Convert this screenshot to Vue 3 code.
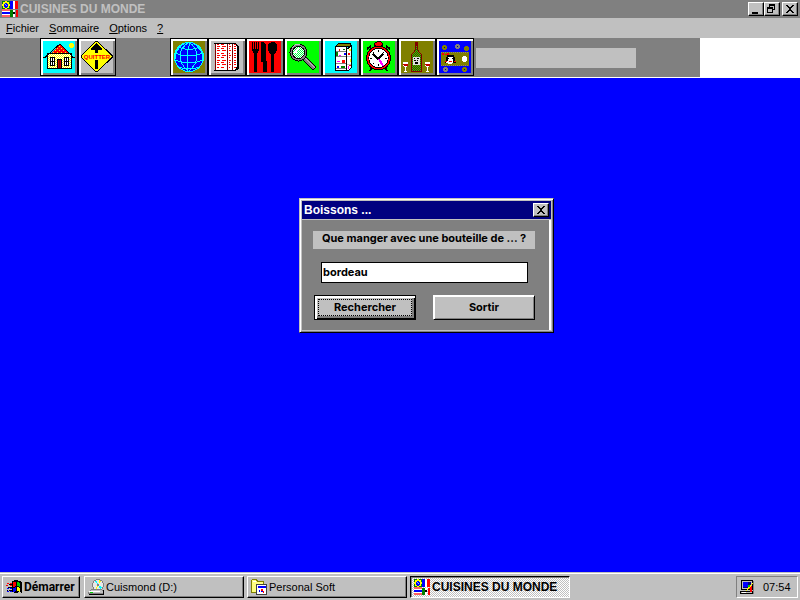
<script setup>
import { ref } from 'vue'

const query = ref('bordeau')
const dialogOpen = ref(true)

const menus = [
  { key: 'F', rest: 'ichier' },
  { key: 'S', rest: 'ommaire' },
  { key: 'O', rest: 'ptions' },
  { key: '?', rest: '' },
]

const tasks = [
  { label: 'Cuismond (D:)', icon: 'drive', active: false },
  { label: 'Personal Soft', icon: 'folder', active: false },
  { label: 'CUISINES DU MONDE', icon: 'flags', active: true },
]

// rows of small print on the recipe page
const printRows = [3, 5, 7, 9, 12, 14, 16, 19, 21, 23, 26]
</script>

<template>
  <div class="screen">
    <svg class="defs" aria-hidden="true">
      <symbol id="flags" viewBox="0 0 16 16">
        <path fill="#008000" d="M0 0h8v8h-8z" />
        <path fill="#ff0" d="M3 0h2v1h2v2h1v2h-1v2h-2v1h-2v-1h-2v-2h-1v-2h1v-2h2z" />
        <path fill="#00f" d="M3 2h2v1h1v3h-1v1h-2v-1h-1v-3h1z" />
        <path fill="#80c0ff" d="M3 3h1v1h1v1h-1v-1h-1z" />
        <path fill="#00f" d="M8 0h3v8h-3z" />
        <path fill="#fff" d="M11 0h2v8h-2z" />
        <path fill="#f00" d="M13 0h3v8h-3z" />
        <path fill="#ff6060" d="M0 8h8v8h-8z" />
        <path fill="#fff" d="M0 10h8v4h-8z" />
        <path fill="#00f" d="M0 11h8v2h-8z" />
        <path fill="#008000" d="M8 9h3v7h-3z" />
        <path fill="#fff" d="M11 9h2v7h-2z" />
        <path fill="#f00" d="M14 9h2v7h-2z" />
        <path fill="#000" d="M11 11h2v2h-2z" />
      </symbol>
      <symbol id="drive" viewBox="0 0 16 16">
        <circle cx="10" cy="6" r="5.500" fill="#e8e8e8" stroke="#808080" />
        <path fill="#0ff" d="M6 2h3l1 3zM14 8l-3-1 1 3z" />
        <path fill="#ff0" d="M11 1l2 1-2 3zM7 9l3-2-1 3z" />
        <circle cx="10" cy="6" r="1" fill="#808080" />
        <path fill="#c0c0c0" stroke="#808080" d="M.5 13.500l3-3h9l3 1v3h-15z" />
        <path fill="#000" d="M1 15h15v1h-15zM15 11h1v5h-1z" />
        <path fill="#fff" d="M1 12h11v1h-11z" />
        <path fill="#0c0" d="M2 13h3v1h-3z" />
      </symbol>
      <symbol id="folder" viewBox="0 0 16 16">
        <path fill="#ffff80" stroke="#808000" d="M.5 13.500v-12l1-1h4l1 2h6v11z" />
        <path fill="#fff" d="M2 2h3v1h-3z" />
        <path fill="#c0c0c0" stroke="#404040" d="M5.500 5.500h10v10h-10z" />
        <path fill="#fff" d="M6 6h9v9h-9z" />
        <path fill="#00f" d="M7 7h8v2h-8z" />
        <path fill="#f00" d="M10 10h2v2h-2zM12 12h1v2h-1z" />
        <path fill="#00f" d="M8 11h1v2h-1zM10 12h2v1h-2z" />
      </symbol>
      <pattern id="roofDots" width="4" height="4" patternUnits="userSpaceOnUse">
        <path fill="#f00" d="M0 0h4v4h-4z" />
        <path fill="#ff0" d="M0 1h1v1h-1zM2 3h1v1h-1z" />
      </pattern>
      <pattern id="wallDots" width="2" height="2" patternUnits="userSpaceOnUse">
        <path fill="#fff" d="M0 0h2v2h-2z" />
        <path fill="#ff0" d="M0 0h1v1h-1zM1 1h1v1h-1z" />
      </pattern>
      <pattern id="lensDots" width="2" height="2" patternUnits="userSpaceOnUse">
        <path fill="#fff" d="M0 0h2v2h-2z" />
        <path fill="#00ff40" d="M0 0h1v1h-1zM1 1h1v1h-1z" />
      </pattern>
      <pattern id="glassDots" width="2" height="2" patternUnits="userSpaceOnUse">
        <path fill="#008000" d="M0 0h2v2h-2z" />
        <path fill="#808000" d="M0 0h1v1h-1zM1 1h1v1h-1z" />
      </pattern>
    </svg>

    <header class="titlebar">
      <svg class="icon16"><use href="#flags" /></svg>
      <h1>CUISINES DU MONDE</h1>
      <div class="controls">
        <button class="ctl" aria-label="Réduire">
          <svg viewBox="0 0 12 10"><path d="M2 8h6v2h-6z" /></svg>
        </button>
        <button class="ctl" aria-label="Restaurer">
          <svg viewBox="0 0 12 10">
            <path fill-rule="evenodd" d="M3 0h6v6h-2v-1h1v-3h-4v1h-1zM1 3h6v6h-6zM2 5v3h4v-3z" />
          </svg>
        </button>
        <button class="ctl close" aria-label="Fermer">
          <svg viewBox="0 0 12 10">
            <path d="M2 1h2v1h1v1h2v-1h1v-1h2v1h-1v1h-1v1h-1v2h1v1h1v1h1v1h-2v-1h-1v-1h-2v1h-1v1h-2v-1h1v-1h1v-1h1v-2h-1v-1h-1v-1h-1z" />
          </svg>
        </button>
      </div>
    </header>

    <nav class="menubar">
      <a v-for="m in menus" :key="m.key" href="#"><u>{{ m.key }}</u>{{ m.rest }}</a>
    </nav>

    <div class="toolbar">
      <div class="tools">
        <div class="group">
          <button class="tool" aria-label="Accueil">
            <svg viewBox="0 0 32 32">
              <path fill="#0ff" d="M0 0h32v32h-32z" />
              <path fill="#ff0" d="M27 2h3v1h1v3h-1v1h-3v-1h-1v-3h1z" />
              <path fill="url(#wallDots)" stroke="#000" d="M4.500 12.500h24v15h-24z" />
              <path fill="url(#roofDots)" d="M16 4h2l8 9h-19z" />
              <path fill="none" stroke="#000" d="M0 16.500h2l4-4h21l3 4h2M6.500 12.500l5-5 5-4h1l4 4 5 5" />
              <path fill="#fff" stroke="#000" d="M7.500 16.500h4v8h-4zM21.500 16.500h4v8h-4z" />
              <path stroke="#000" d="M9.500 16v8M7 20.500h5M23.500 16v8M21 20.500h5" />
              <path fill="#c00000" stroke="#000" d="M14.500 18.500h4v9h-4z" />
              <path fill="#800000" d="M16 19h1v8h-1z" />
            </svg>
          </button>
          <button class="tool" aria-label="Quitter">
            <svg viewBox="0 0 32 32">
              <path fill="#c0c0c0" d="M0 0h32v32h-32z" />
              <path fill="#ff0" stroke="#000" d="M14.500.500h2l14.500 14v2l-14.500 14h-2l-14-14v-2z" />
              <path d="M15 2h1v1h1v1h1v1h1v1h1v1h1v2h-4v3h-3v-3h-4v-2h1v-1h1v-1h1v-1h1v-1h1zM14 19h3v9h-3z" />
              <text x="16" y="18" text-anchor="middle">QUITTER</text>
            </svg>
          </button>
        </div>
        <div class="group">
          <button class="tool" aria-label="Pays">
            <svg viewBox="0 0 32 32">
              <path fill="#808000" d="M0 0h32v32h-32z" />
              <circle cx="16" cy="16" r="14.500" fill="#00f" />
              <g fill="none" stroke="#0ff">
                <circle cx="16" cy="16" r="14.500" />
                <path d="M5 6q11 5 22 0M2 12q14 6 28 0M2 19q14 6 28 0M6 26q10 4 20 0M16 1q-9 6-9 14t8 15M16 1q8 6 8 14t-8 15M13 1q-12 8-11 18M18 1q-6 8-3 29M19 1q12 8 11 18" />
              </g>
            </svg>
          </button>
          <button class="tool" aria-label="Recettes">
            <svg viewBox="0 0 32 32">
              <path fill="#c0c0c0" d="M0 0h32v32h-32z" />
              <path fill="#fff" d="M4 2h20v1h2v26h-22z" />
              <path fill="none" stroke="#000" d="M3 2.500h21l2 2v22l-2 3h-21M27.500 5v22l-2 2" />
              <path stroke="#800000" d="M4.500 3v26M16.500 3v26M21.500 3v26" />
              <path
                v-for="(y, i) in printRows"
                :key="y"
                fill="#f00"
                :d="`M6 ${y}h${2 + (i % 2)}v1h-3zM${10 + (i % 2)} ${y}h${3 + (i % 2)}v1h-4zM18 ${y}h${1 + (i % 2)}v1h-2zM23 ${y}h2v1h-2z`"
              />
            </svg>
          </button>
          <button class="tool" aria-label="Plats">
            <svg viewBox="0 0 32 32">
              <path fill="#f00" d="M0 0h32v32h-32z" />
              <path d="M3 1h1v7h1v-7h1v7h1v-7h1v7h1v-7h1v9h-1v2h-1v19h-3v-19h-1v-2h-1z" />
              <path d="M12 1h3v1h1v1h1v17h1v11h-4v-10h-2z" />
              <path d="M22 1h4v1h1v1h1v7h-1v2h-1v1h-1v18h-3v-18h-1v-1h-1v-2h-1v-7h1v-1h2z" />
            </svg>
          </button>
          <button class="tool" aria-label="Rechercher une recette">
            <svg viewBox="0 0 32 32">
              <path fill="#0f0" d="M0 0h32v32h-32z" />
              <path stroke="#000" stroke-width="5" d="M17 17l11 11" />
              <path stroke="#808080" stroke-width="3" d="M17 17l10.500 10.500" />
              <path stroke="#c0c0c0" d="M18 17l10 10" />
              <circle cx="11.500" cy="11.500" r="9" />
              <circle cx="11.500" cy="11.500" r="8" fill="#808080" />
              <circle cx="11.500" cy="11.500" r="6.500" />
              <circle cx="11.500" cy="11.500" r="5.500" fill="url(#lensDots)" />
              <path fill="none" stroke="#fff" stroke-width="2" d="M8 12l4-5" />
              <path fill="none" stroke="#c0c0c0" d="M5 7l3-3 5-1" />
            </svg>
          </button>
          <button class="tool" aria-label="Réfrigérateur">
            <svg viewBox="0 0 32 32">
              <path fill="#0ff" d="M0 0h32v32h-32z" />
              <path fill="#fff" stroke="#000" d="M10.500 5.500h11v24h-11z" />
              <path fill="#808000" stroke="#000" d="M10.500 5.500l3-3h12v3z" />
              <path fill="#fff" stroke="#000" d="M21.500 8.500l5-4v22l-3 3h-2z" />
              <path fill="#c0c0c0" d="M22 15h4v1h-4zM22 23h4v1h-4z" />
              <path stroke="#808080" d="M11 10.500h10M11 15.500h10M11 22.500h10M11 27.500h10" />
              <path fill="#f00" d="M17 19h3v3h-3zM14 8h1v2h-1zM23 12h2v2h-2zM24 24h2v1h-2z" />
              <path fill="#008000" d="M11 11h2v4h-2zM18 8h2v1h-2zM16 25h4v2h-4z" />
              <path fill="#f0f" d="M14 14h2v1h-2zM12 20h3v1h-3zM23 25h1v3h-1z" />
              <path fill="#00f" d="M19 12h2v2h-2zM12 25h2v2h-2z" />
              <path fill="#ff0" d="M24 8h2v2h-2zM25 18h1v3h-1z" />
            </svg>
          </button>
          <button class="tool" aria-label="Temps de préparation">
            <svg viewBox="0 0 32 32">
              <path fill="#0f0" d="M0 0h32v32h-32z" />
              <path fill="none" stroke="#000" stroke-width="2" d="M9 26l-2 4M22 26l2 4M4 8l4-3M27 8l-4-3" />
              <path fill="#f00" stroke="#000" d="M14.500.500h3l2 2v2l-2 1h-4l-2-1v-2z" />
              <path fill="#000" d="M15 5h2v2h-2z" />
              <circle cx="15.500" cy="17" r="12.500" />
              <circle cx="15.500" cy="17" r="11.500" fill="#f00" />
              <circle cx="15.500" cy="17" r="10.200" />
              <circle cx="15.500" cy="17" r="9.400" fill="#fff" />
              <path stroke="#000" d="M15.500 9v2M15.500 23v2M7 17.500h2M22 17.500h2M10 11l1 1M21 11l-1 1M10 23l1-1" />
              <path fill="none" stroke="#000" stroke-width="2" d="M10 13l5 5 5-5" />
              <path fill="none" stroke="#f0f" stroke-width="2" d="M16 18l4 7" />
            </svg>
          </button>
          <button class="tool" aria-label="Boissons" @click="dialogOpen = true">
            <svg viewBox="0 0 32 32">
              <path fill="#808000" d="M0 0h32v32h-32z" />
              <path fill="url(#glassDots)" stroke="#800000" d="M14.500 1.500h2v7l2 3 2 2v17h-10v-17l2-2 2-3z" />
              <path fill="#800000" d="M14 1h3v4h-3z" />
              <path fill="#e0e0e0" d="M12 16h7v8h-7z" />
              <path d="M13 17h1v1h-1zM16 17h2v1h-2zM13 19h2v1h-2zM16 19h1v1h-1zM14 21h3v2h-3z" />
              <path fill="#fff" d="M2 21h5v3l-1 2h-1v4h1v1h-3v-1h1v-4h-1l-1-2zM24 21h5v3l-1 2h-1v4h1v1h-3v-1h1v-4h-1l-1-2z" />
              <path fill="#c00000" d="M2 23h5v1l-1 1h-3l-1-1zM24 23h5v1l-1 1h-3l-1-1z" />
            </svg>
          </button>
          <button class="tool" aria-label="Cuisine">
            <svg viewBox="0 0 32 32">
              <path fill="#00f" d="M0 0h32v32h-32z" />
              <path fill="#808000" d="M2 11h28v14h-28z" />
              <path stroke="#808080" stroke-dasharray="1 1" d="M2 11.500h28M2 24.500h28" />
              <g stroke-width="2" fill="#000080">
                <circle cx="5.500" cy="6.500" r="1.500" stroke="#808000" />
                <circle cx="18.500" cy="5.500" r="1.500" stroke="#808080" />
                <circle cx="27.500" cy="7.500" r="1.500" fill="#808000" stroke="#808000" />
                <circle cx="6.500" cy="28.500" r="1.500" stroke="#808080" />
                <circle cx="25.500" cy="28.500" r="1.500" stroke="#808000" />
              </g>
              <path fill="#f00" d="M3 12h2v2h-2zM6 13h2v1h-2zM8 12h2v2h-2z" />
              <path d="M8 14h7v2h1v4h1v2h-11v-2h1v-4h1z" />
              <path fill="#fff" d="M9 16h5v6h-1v1h-4v-1h-2v-2h2z" />
              <path fill="#f00" d="M6 20h2v1h-2zM15 20h2v1h-2zM10 20h3v1h-3z" />
              <path d="M9 17h1v1h-1zM13 17h1v1h-1z" />
              <path fill="#fff" d="M24 15h3v1h1v4h-1v1h-3v-1h-1v-4h1z" />
            </svg>
          </button>
        </div>
        <div class="status"></div>
      </div>
      <div class="blank"></div>
    </div>

    <main class="desktop">
      <form v-if="dialogOpen" class="dialog" @submit.prevent>
        <div class="dialog-title">
          <h2>Boissons ...</h2>
          <button type="button" class="ctl" aria-label="Fermer" @click="dialogOpen = false">
            <svg viewBox="0 0 12 10">
              <path d="M2 1h2v1h1v1h2v-1h1v-1h2v1h-1v1h-1v1h-1v2h1v1h1v1h1v1h-2v-1h-1v-1h-2v1h-1v1h-2v-1h1v-1h1v-1h1v-2h-1v-1h-1v-1h-1z" />
            </svg>
          </button>
        </div>
        <div class="dialog-body">
          <label for="wine">Que manger avec une bouteille de ... ?</label>
          <input id="wine" v-model="query" type="text" />
          <div class="actions">
            <button type="submit" class="push default"><span>Rechercher</span></button>
            <button type="button" class="push" @click="dialogOpen = false"><span>Sortir</span></button>
          </div>
        </div>
      </form>
    </main>

    <footer class="taskbar">
      <button class="start">
        <svg class="icon16" viewBox="0 0 16 16">
          <path d="M6 2l4-1 6 2v11l-3-1-3 1-4-1z" />
          <path fill="#f00" d="M7 3h3v4l-3 1z" />
          <path fill="#0c0" d="M11 3l3 1v4l-3-1z" />
          <path fill="#00f" d="M7 9l3-1v4l-3 1z" />
          <path fill="#ff0" d="M11 8l3 1v4l-3-1z" />
          <path fill="#f00" d="M4 4h2v1h-2zM1 4h2v1h-2zM4 6h2v1h-2zM0 6h2v1h-2z" />
          <path fill="#00f" d="M4 9h2v1h-2zM1 9h2v1h-2zM4 12h2v1h-2zM1 12h2v1h-2z" />
          <path d="M3 5h3v1h-3zM2 8h4v1h-4zM3 11h3v1h-3zM1 11h1v1h-1z" />
        </svg>
        <span>Démarrer</span>
      </button>
      <button v-for="t in tasks" :key="t.label" class="task" :class="{ active: t.active }">
        <svg class="icon16"><use :href="'#' + t.icon" /></svg>
        <span>{{ t.label }}</span>
      </button>
      <div class="tray">
        <svg class="icon16" viewBox="0 0 16 16">
          <path fill="#c0c0c0" stroke="#000" d="M2.500 1.500h11v9h-11zM1.500 12.500h12v2h-12z" />
          <path fill="#000080" d="M4 3h8v6h-8z" />
          <path fill="#00f" d="M4 3h5v5h-5z" />
          <path fill="#808080" d="M14 2h1v13h-1z" />
          <path fill="#f00" d="M10 7h3v6h-2v-3h-1z" />
          <path stroke="#ff0" d="M14 4l-7 8" />
          <path fill="#0c0" d="M9 6h2v2h-2z" />
          <path fill="#fff" d="M3 13h4v1h-4z" />
        </svg>
        <time>07:54</time>
      </div>
    </footer>
  </div>
</template>

<style>
body {
  margin: 0;
  background: #00f;
}
</style>

<style scoped>
.screen {
  min-height: 100vh;
  display: flex;
  flex-direction: column;
  background: #00f;
  color: #000;
  font: 11px/16px "Liberation Sans", Arial, sans-serif;
}

.defs {
  position: absolute;
  width: 0;
  height: 0;
}

svg {
  display: block;
  flex: none;
  shape-rendering: crispEdges;
}

button {
  margin: 0;
  padding: 0;
  font: inherit;
  color: inherit;
  background: #c0c0c0;
  border: 0;
  border-radius: 0;
}

h1,
h2 {
  margin: 0;
  font: bold 12px/16px "Liberation Sans", Arial, sans-serif;
}

.icon16 {
  width: 16px;
  height: 16px;
}

.titlebar {
  display: flex;
  align-items: center;
  gap: 2px;
  height: 18px;
  padding: 0 2px;
  background: #808080;
  color: #c0c0c0;
}

.controls {
  display: flex;
  margin-left: auto;
}

.ctl {
  box-sizing: border-box;
  width: 16px;
  height: 14px;
  padding: 1px;
  border: 1px solid;
  border-color: #fff #000 #000 #fff;
  box-shadow: inset -1px -1px #808080;
}

.ctl svg {
  width: 12px;
  height: 10px;
}

.ctl.close {
  margin-left: 2px;
}

.menubar {
  display: flex;
  height: 20px;
  padding-left: 1px;
  background: #c0c0c0;
}

.menubar a {
  padding: 2px 5px;
  color: #000;
  text-decoration: none;
}

.toolbar {
  display: flex;
  height: 39px;
  border-bottom: 1px solid #fff;
}

.tools {
  flex: 1;
  display: flex;
  align-items: flex-start;
  padding-left: 40px;
  background: #808080;
}

.blank {
  width: 100px;
  background: #fff;
}

.group {
  display: flex;
  margin-right: 54px;
}

.group + .group {
  margin-right: 2px;
}

.tool {
  box-sizing: border-box;
  width: 38px;
  height: 38px;
  padding: 2px;
  border: 1px solid #000;
  background: #808080;
  box-shadow: inset 2px 2px #fff, inset -2px -2px #808080;
}

.tool svg {
  width: 32px;
  height: 32px;
}

.tool text {
  fill: #f00;
  font: bold 6px "Liberation Sans", Arial, sans-serif;
}

.status {
  width: 160px;
  height: 20px;
  margin-top: 10px;
  background: #c0c0c0;
}

.desktop {
  position: relative;
  flex: 1;
}

.dialog {
  position: absolute;
  left: 299px;
  top: 120px;
  box-sizing: border-box;
  width: 255px;
  padding: 1px;
  border: 1px solid;
  border-color: #c0c0c0 #000 #000 #c0c0c0;
  background: #c0c0c0;
  box-shadow: inset 1px 1px #fff, inset -1px -1px #808080;
  font: bold 11px/16px Inter, "Liberation Sans", sans-serif;
}

.dialog-title {
  display: flex;
  align-items: center;
  justify-content: space-between;
  height: 18px;
  margin: 1px 1px 1px;
  padding: 0 2px;
  background: #000080;
  color: #fff;
}

.dialog-body {
  margin: 0 1px 1px;
  padding: 11px 14px 10px 11px;
  border-right: 2px solid #fff;
  background: #808080;
}

.dialog-body label {
  display: block;
  height: 18px;
  line-height: 14px;
  text-align: center;
  background: #c0c0c0;
}

.dialog-body input {
  display: block;
  box-sizing: border-box;
  width: 207px;
  height: 21px;
  margin: 13px 0 12px 8px;
  padding: 0 1px 2px;
  border: 1px solid #000;
  border-radius: 0;
  outline: 0;
  background: #fff;
  color: #000;
  font: inherit;
}

.actions {
  display: flex;
  justify-content: space-between;
  padding-left: 1px;
}

.push {
  box-sizing: border-box;
  width: 102px;
  height: 25px;
  padding: 2px;
  border: 1px solid;
  border-color: #fff #000 #000 #fff;
  box-shadow: inset 1px 1px #fff, inset -1px -1px #808080;
}

.push span {
  display: block;
  line-height: 19px;
}

.push.default {
  border: 1px solid #000;
  box-shadow: inset 2px 2px #fff, inset -1px -1px #000, inset -3px -3px #808080;
  padding: 3px;
}

.push.default span {
  line-height: 15px;
  border: 1px dotted #000;
}

.taskbar {
  display: flex;
  align-items: center;
  gap: 3px;
  box-sizing: border-box;
  height: 28px;
  padding: 3px 2px 1px;
  background: #c0c0c0;
  box-shadow: inset 0 1px #c0c0c0, inset 0 2px #fff;
}

.start,
.task {
  display: flex;
  align-items: center;
  box-sizing: border-box;
  height: 22px;
  padding: 0 3px;
  border: 1px solid;
  border-color: #fff #000 #000 #fff;
  box-shadow: inset -1px -1px #808080;
  white-space: nowrap;
}

.start {
  width: 78px;
  gap: 2px;
  margin-right: 1px;
  font: bold 12px/16px Roboto, "Liberation Sans", sans-serif;
}

.task {
  flex: 0 1 160px;
  gap: 2px;
}

.task.active {
  border-color: #000 #fff #fff #000;
  box-shadow: inset 1px 1px #808080;
  background: repeating-conic-gradient(#fff 0 25%, #c0c0c0 0 50%) 0 0 / 2px 2px;
  font: bold 12px/16px "Liberation Sans", Arial, sans-serif;
}

.tray {
  display: flex;
  align-items: center;
  gap: 8px;
  box-sizing: border-box;
  width: 62px;
  height: 22px;
  margin-left: auto;
  padding: 0 2px;
  border: 1px solid;
  border-color: #808080 #fff #fff #808080;
}
</style>
